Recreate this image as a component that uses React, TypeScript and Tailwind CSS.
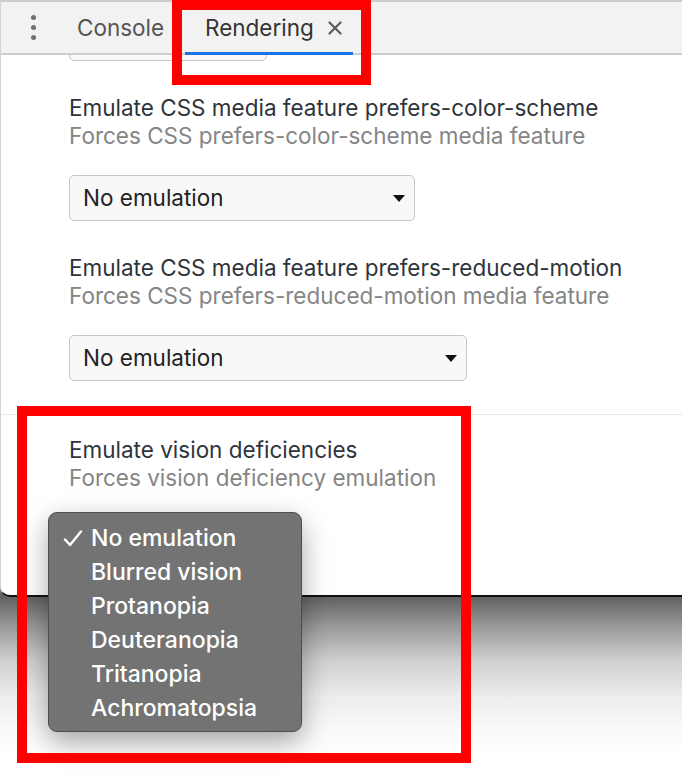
const options = ["No emulation", "Blurred vision", "Protanopia", "Deuteranopia", "Tritanopia", "Achromatopsia"];

type SelectBoxProps = {
  width: string;
  className?: string;
};

// fake closed <select> like devtools draws it
const SelectBox = ({ width, className = "" }: SelectBoxProps) => (
  <div
    className={`${width} ${className} h-[46px] flex items-center justify-between pl-[13px] pr-[9px] rounded-[5px] border-[1.5px] border-[#c6c6c6] bg-[#f8f8f8] text-[22.5px] text-[#222]`}
  >
    <span>No emulation</span>
    <svg width="12" height="7" viewBox="0 0 12 7">
      <path d="M0 0 L12 0 L6 7 Z" fill="#111" />
    </svg>
  </div>
);

type SectionProps = {
  title: string;
  desc: string;
  selectWidth?: string;
};

const Section = ({ title, desc, selectWidth }: SectionProps) => (
  <div className="flex flex-col">
    <div className="text-[22.5px] leading-[28px] text-[#2e343b]">{title}</div>
    <div className="text-[22.5px] leading-[28px] text-[#858585]">{desc}</div>
    {selectWidth && <SelectBox width={selectWidth} className="mt-[25px]" />}
  </div>
);

const App = () => {
  return (
    <div className="relative w-[682px] h-[776px] overflow-hidden bg-white font-['Inter','Helvetica_Neue','Liberation_Sans',sans-serif]">
      {/* devtools window */}
      <div className="bg-[#626262]">
        <div className="h-[597px] flex flex-col bg-white border-l border-[#d4d4d4] border-b-2 border-b-[#111] rounded-bl-[10px] overflow-hidden">
          {/* tab strip */}
          <div className="h-[55px] shrink-0 flex items-stretch bg-[#f2f2f2] border-t-2 border-b-2 border-[#cdcdcd]">
            <div className="w-[65px] flex flex-col items-center justify-center gap-[5px]">
              <span className="w-[5px] h-[5px] rounded-full bg-[#6f6f6f]" />
              <span className="w-[5px] h-[5px] rounded-full bg-[#6f6f6f]" />
              <span className="w-[5px] h-[5px] rounded-full bg-[#6f6f6f]" />
            </div>
            <div className="w-[119px] flex items-center pl-[11px] text-[22.5px] text-[#555]">Console</div>
            <div className="relative w-[168px] flex items-center pl-[20px] text-[22.5px] text-[#333]">
              <span>Rendering</span>
              <svg className="ml-auto mr-[11px]" width="14" height="14" viewBox="0 0 14 14">
                <path d="M1.5 1.5 L12.5 12.5 M12.5 1.5 L1.5 12.5" stroke="#5a5a5a" strokeWidth="2.2" strokeLinecap="round" />
              </svg>
              <div className="absolute left-0 right-0 bottom-[-2px] h-[3px] bg-[#1a73e8]" />
            </div>
          </div>

          {/* rendering panel content */}
          <div className="flex-1 overflow-hidden pl-[68px]">
            <div className="w-[198px] h-[46px] mt-[-40px] rounded-[5px] border-[1.5px] border-[#c6c6c6] bg-[#f8f8f8]" />
            <div className="mt-[33px]">
              <Section
                title="Emulate CSS media feature prefers-color-scheme"
                desc="Forces CSS prefers-color-scheme media feature"
                selectWidth="w-[346px]"
              />
            </div>
            <div className="mt-[33px]">
              <Section
                title="Emulate CSS media feature prefers-reduced-motion"
                desc="Forces CSS prefers-reduced-motion media feature"
                selectWidth="w-[398px]"
              />
            </div>
            <div className="mt-[33px] -ml-[68px] border-t border-[#e9e9e9]" />
            <div className="pt-[21px]">
              {/* its select sits under the open menu */}
              <Section title="Emulate vision deficiencies" desc="Forces vision deficiency emulation" />
            </div>
          </div>
        </div>
      </div>

      {/* window shadow on the desktop */}
      <div className="h-[179px] bg-[linear-gradient(to_bottom,#616161_0%,#989898_16%,#cecece_35%,#ececec_55%,#fafafa_75%,#ffffff_90%)]" />

      {/* open popup menu */}
      <div className="absolute left-[48px] top-[512px] w-[254px] h-[220px] py-[8px] rounded-[9px] border border-[#4e4e4e] bg-[#737373] shadow-[0_10px_28px_rgba(0,0,0,0.35)] font-['Inter','Noto_Sans',sans-serif]">
        {options.map((opt, i) => (
          <div key={opt} className="h-[34px] flex items-center text-[23px] font-medium text-white">
            <div className="w-[42px] flex justify-end pr-[8px]">
              {i === 0 && (
                <svg width="20" height="17" viewBox="0 0 20 17">
                  <path d="M2 9.5 L7 15 L18 1.5" fill="none" stroke="#fff" strokeWidth="2.4" strokeLinecap="round" strokeLinejoin="round" />
                </svg>
              )}
            </div>
            <span>{opt}</span>
          </div>
        ))}
      </div>

      {/* red annotation boxes */}
      <div className="absolute left-[172px] top-0 w-[199px] h-[85px] border-[10px] border-[#ff0000]" />
      <div className="absolute left-[17px] top-[406px] w-[454px] h-[357px] border-[10px] border-[#ff0000]" />
    </div>
  );
};

export default App;
